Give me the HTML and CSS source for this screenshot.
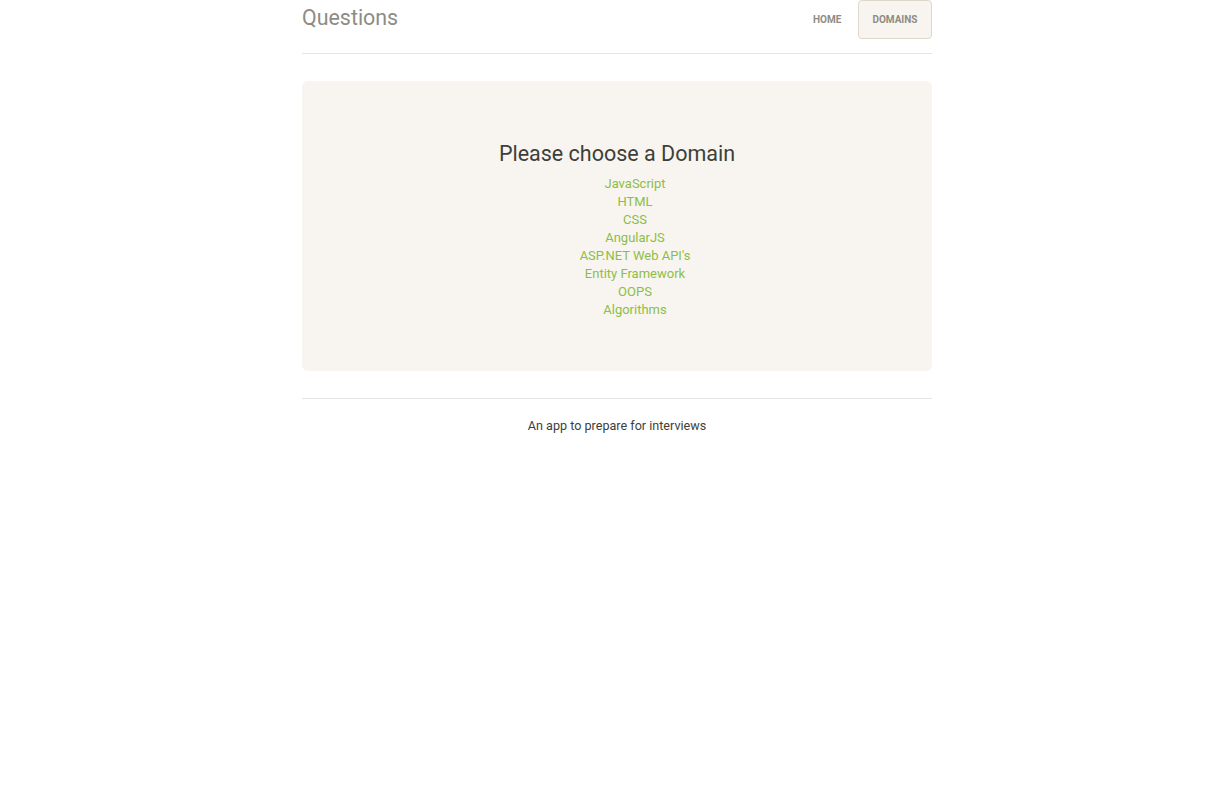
FILE: index.html
```html
<!DOCTYPE html>
<html>
<head>
<meta charset="utf-8">
<link rel="stylesheet" href="styles.css">
</head>
<body>
<div class="container">
  <header class="header">
    <h3 class="brand">Questions</h3>
    <nav class="nav">
      <a class="pill" href="#">Home</a>
      <a class="pill active" href="#">Domains</a>
    </nav>
  </header>
  <main class="jumbotron">
    <h3 class="title">Please choose a Domain</h3>
    <ul class="domains">
      <li><a href="#">JavaScript</a></li>
      <li><a href="#">HTML</a></li>
      <li><a href="#">CSS</a></li>
      <li><a href="#">AngularJS</a></li>
      <li><a href="#">ASP.NET Web API's</a></li>
      <li><a href="#">Entity Framework</a></li>
      <li><a href="#">OOPS</a></li>
      <li><a href="#">Algorithms</a></li>
    </ul>
  </main>
  <footer class="footer">
    <p>An app to prepare for interviews</p>
  </footer>
</div>
</body>
</html>
```

FILE: styles.css
```css
html, body {
  margin: 0;
  padding: 0;
  background: #fff;
}
body {
  font-family: Roboto, "Noto Sans", sans-serif;
  font-size: 13px;
  line-height: 18px;
  color: #3e3f3a;
}
.container {
  width: 630px;
  margin-left: calc(50% - 313.5px);
}
.header {
  display: flex;
  justify-content: space-between;
  align-items: flex-start;
  height: 53px;
  border-bottom: 1px solid #e5e5e5;
}
.brand {
  margin: 4px 0 0 0;
  font-size: 21.4px;
  font-weight: 400;
  line-height: 28px;
  color: #8e8c84;
}
.nav {
  display: flex;
  gap: 2px;
}
.pill {
  display: block;
  padding: 0 13.5px;
  height: 37px;
  line-height: 38px;
  font-size: 10px;
  font-weight: 700;
  text-transform: uppercase;
  text-decoration: none;
  color: #8e8c84;
  border: 1px solid transparent;
  border-radius: 4px;
}
.pill.active {
  background: #f8f5f0;
  border-color: #dfd7ca;
  color: #8e8c84;
}
.jumbotron {
  margin-top: 27px;
  background: #f8f5f0;
  border-radius: 6px;
  height: 290px;
  padding-top: 60px;
  box-sizing: border-box;
  text-align: center;
}
.title {
  margin: 0;
  font-size: 21.5px;
  font-weight: 400;
  line-height: 26px;
  color: #3e3f3a;
}
.domains {
  list-style: none;
  margin: 8px 0 0 0;
  padding: 0 0 0 36px;
}
.domains a {
  color: #8dbd47;
  text-decoration: none;
}
.footer {
  margin-top: 27px;
  border-top: 1px solid #e5e5e5;
  padding-top: 18px;
  text-align: center;
}
.footer p {
  margin: 0;
  font-size: 12.6px;
}
```
